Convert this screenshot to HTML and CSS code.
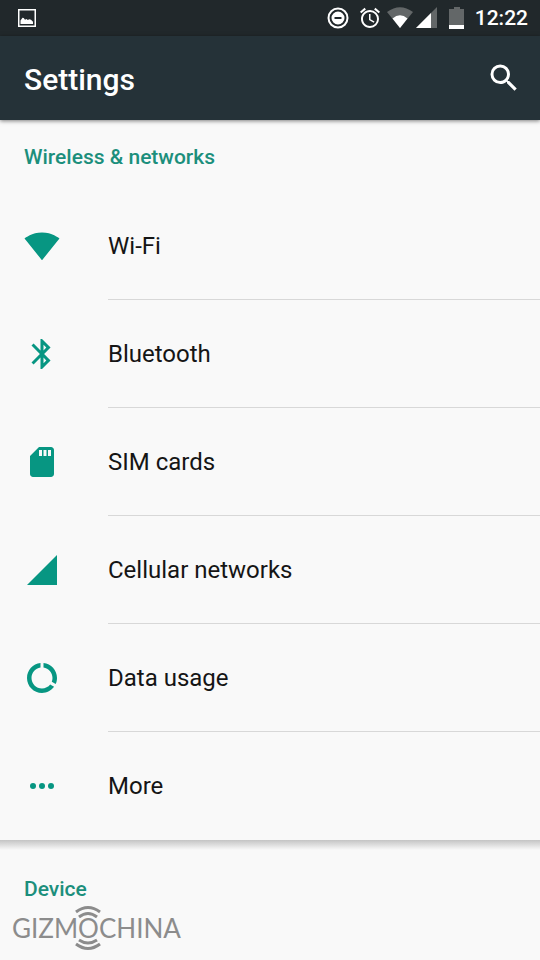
FILE: index.html
```html
<!DOCTYPE html>
<html lang="en">
<head>
<meta charset="utf-8">
<meta name="viewport" content="width=device-width, initial-scale=1">
<title>Settings</title>
<link rel="stylesheet" href="styles.css">
</head>
<body>
<div class="status-bar">
  <svg class="status-icon" viewBox="0 0 24 24" aria-hidden="true"><path fill-rule="evenodd" d="M3 3h18v18H3zM4.500 4.500v15h15v-15z"/><path d="M5.500 18v-3.500l2-2.700 1.200.2 1.300 1.700 1.500-.8 1.300 1.200 1.500-.8 1.700.5 2 2V18z"/></svg>
  <div class="status-group">
    <svg class="status-icon" viewBox="0 0 24 24" aria-hidden="true"><circle class="ring" cx="12" cy="12" r="9.500"/><path fill-rule="evenodd" d="M12 5.500a6.500 6.500 0 1 0 0 13a6.500 6.500 0 0 0 0-13zM8.500 11h7v2h-7z"/></svg>
    <svg class="status-icon alarm" viewBox="0 0 24 24" aria-hidden="true"><path d="M22 5.720l-4.600-3.860-1.290 1.530 4.600 3.860L22 5.720zM7.880 3.390L6.600 1.860 2 5.710l1.290 1.530 4.590-3.850zM12.500 8H11v6l4.750 2.850.75-1.230-4-2.370V8zM12 4c-4.970 0-9 4.030-9 9s4.020 9 9 9a9 9 0 0 0 0-18zm0 16c-3.870 0-7-3.130-7-7s3.130-7 7-7 7 3.130 7 7-3.130 7-7 7z"/></svg>
    <svg class="status-wifi" viewBox="0 0 26 22" aria-hidden="true"><path class="dim" d="M0 5Q13-4.500 26 5L13 21z"/><path d="M5.500 11.500Q13 5 20.500 11.500L13 21z"/></svg>
    <svg class="status-cell" viewBox="0 0 22 22" aria-hidden="true"><path class="dim" d="M0 21L21 0v21z"/><path d="M0 21L15 6v15z"/></svg>
    <svg class="status-battery" viewBox="0 0 16 22" aria-hidden="true"><path class="dim" d="M0 2h5V0h6v2h4v16H0z"/><path d="M0 18h15v4H0z"/></svg>
    <span class="clock">12:22</span>
  </div>
</div>
<header class="app-bar">
  <h1>Settings</h1>
  <button class="search" type="button" aria-label="Search"><svg class="icon" viewBox="0 0 24 24" aria-hidden="true"><path d="M15.500 14h-.79l-.28-.27A6.470 6.470 0 0 0 16 9.500 6.500 6.500 0 1 0 9.500 16c1.610 0 3.090-.59 4.230-1.570l.27.28v.79l5 4.990L20.490 19l-4.990-5zm-6 0C7.010 14 5 11.990 5 9.500S7.010 5 9.500 5 14 7.010 14 9.500 11.990 14 9.500 14z"/></svg></button>
</header>
<main>
  <section class="group">
    <h2>Wireless &amp; networks</h2>
    <ul>
      <li><a href="#wifi"><svg class="icon" viewBox="0 0 24 24" aria-hidden="true"><path d="M12.010 21.490L23.640 7c-.45-.34-4.930-4-11.640-4C5.280 3 .81 6.660.36 7l11.630 14.490z"/></svg><span>Wi-Fi</span></a></li>
      <li><a href="#bluetooth"><svg class="icon" viewBox="0 0 24 24" aria-hidden="true"><path d="M17.710 7.710L12 2h-1v7.590L6.410 5 5 6.410 10.590 12 5 17.590 6.410 19 11 14.410V22h1l5.710-5.710-4.300-4.290 4.300-4.290zM13 5.830l1.880 1.880L13 9.590V5.830zm1.880 10.460L13 18.170v-3.760l1.880 1.880z"/></svg><span>Bluetooth</span></a></li>
      <li><a href="#sim"><svg class="icon" viewBox="0 0 24 24" aria-hidden="true"><path d="M18 2h-8L4 8v12c0 1.100.9 2 2 2h12c1.100 0 2-.9 2-2V4c0-1.100-.9-2-2-2zm-6 6h-2V4h2v4zm3 0h-2V4h2v4zm3 0h-2V4h2v4z"/></svg><span>SIM cards</span></a></li>
      <li><a href="#cellular"><svg class="icon" viewBox="0 0 24 24" aria-hidden="true"><path d="M2 22h20V2z"/></svg><span>Cellular networks</span></a></li>
      <li><a href="#data"><svg class="icon" viewBox="0 0 24 24" aria-hidden="true"><path d="M13 2.050v3.030c3.390.49 6 3.390 6 6.920 0 .9-.18 1.750-.48 2.540l2.600 1.530c.56-1.240.88-2.620.88-4.070 0-5.180-3.950-9.450-9-9.950zM12 19c-3.870 0-7-3.130-7-7 0-3.530 2.610-6.430 6-6.920V2.050c-5.060.5-9 4.760-9 9.950 0 5.520 4.470 10 9.990 10 3.310 0 6.240-1.610 8.060-4.090l-2.600-1.530C16.170 17.980 14.210 19 12 19z"/></svg><span>Data usage</span></a></li>
      <li><a href="#more"><svg class="icon" viewBox="0 0 24 24" aria-hidden="true"><circle cx="6" cy="12" r="2"/><circle cx="12" cy="12" r="2"/><circle cx="18" cy="12" r="2"/></svg><span>More</span></a></li>
    </ul>
  </section>
  <section class="group next">
    <h2>Device</h2>
  </section>
</main>
<div class="watermark">
  <span>GIZM</span><span class="beacon">O<svg viewBox="0 0 28 46" aria-hidden="true"><path d="M2 7Q14-2 26 7M5 12Q14 5 23 12M5 35Q14 41 23 35M2 39Q14 48 26 39"/></svg></span><span>CHINA</span>
</div>
</body>
</html>
```
FILE: styles.css
```css
* { box-sizing: border-box; }
html { height: 100%; }
body {
  position: relative;
  min-height: 100%;
  margin: 0;
  overflow: hidden;
  background: #f9f9f9;
  color: #151515;
  font-family: Roboto, "Liberation Sans", sans-serif;
}
h1, h2, ul { margin: 0; padding: 0; }
h1, h2 { font-weight: 500; }
ul { list-style: none; }
svg { display: block; flex: none; fill: currentColor; }
.status-bar {
  display: flex;
  align-items: center;
  justify-content: space-between;
  height: 36px;
  padding: 0 12px 0 15px;
  background: #21282b;
  color: #fff;
}
.status-group { display: flex; align-items: center; }
.status-icon { width: 24px; height: 24px; }
.ring { fill: none; stroke: currentColor; stroke-width: 2; }
.dim { fill: #636768; }
.alarm { margin: 0 5px 0 8px; }
.status-wifi { width: 26px; height: 22px; }
.status-cell { width: 22px; height: 22px; margin: 0 11px 0 3px; }
.status-battery { width: 16px; height: 22px; }
.clock { margin-left: 10px; font-size: 21px; font-weight: 500; line-height: 38px; }
.app-bar {
  position: relative;
  display: flex;
  align-items: center;
  justify-content: space-between;
  height: 84px;
  padding: 0 18px 0 24px;
  background: #253238;
  color: #fff;
  box-shadow: 0 1px 4px rgba(0, 0, 0, 0.5);
}
h1 { padding-top: 3px; font-size: 30px; line-height: 36px; }
.search { padding: 0; border: 0; background: none; color: inherit; }
.icon { width: 36px; height: 36px; }
.group h2 {
  padding: 24px 24px 0;
  height: 72px;
  color: #1c8f7c;
  font-size: 21px;
  line-height: 26px;
}
.group a {
  display: flex;
  align-items: center;
  height: 108px;
  padding-left: 24px;
  color: inherit;
  font-size: 24px;
  text-decoration: none;
}
.group .icon { margin-right: 48px; color: #079682; }
.group a span {
  flex: 1;
  padding-top: 2px;
  line-height: 105px;
  border-bottom: 1px solid #d8d8d8;
}
.group li:last-child span { border-bottom-color: transparent; }
.next {
  padding-top: 12px;
  background: linear-gradient(#c4c4c4, #f9f9f9 10px);
}
.watermark {
  position: absolute;
  left: 12px;
  bottom: 16px;
  display: flex;
  color: #8c8c8c;
  font-family: Lato, sans-serif;
  font-size: 26px;
  font-weight: 400;
  line-height: 32px;
}
.beacon { position: relative; }
.beacon svg {
  position: absolute;
  top: -7px;
  left: 50%;
  width: 28px;
  height: 46px;
  margin-left: -14px;
  fill: none;
  stroke: currentColor;
  stroke-width: 3;
}
```
